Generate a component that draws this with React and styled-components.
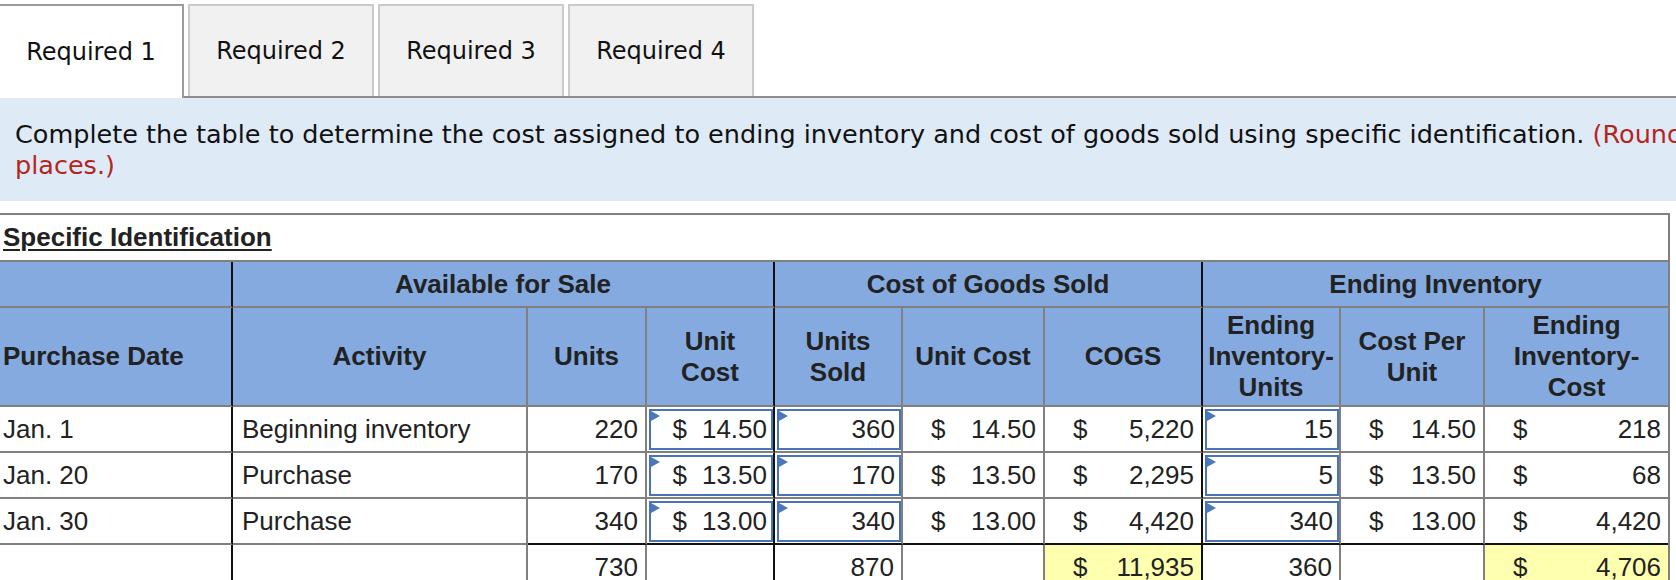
import React from 'react';
import styled, { createGlobalStyle, css } from 'styled-components';

const GlobalStyle = createGlobalStyle`
  html, body {
    margin: 0;
    padding: 0;
    background: #fff;
    overflow: hidden;
  }
`;

const GRID = '#808080';
const SEP = '#111';

const Page = styled.div`
  width: 1680px;
  margin-left: -2px;
  padding-top: 4px;
`;

const TabBar = styled.div`
  display: flex;
  align-items: flex-end;
  gap: 4px;
  height: 92px;
  border-bottom: 2px solid #8c8c8c;
`;

const Tab = styled.div`
  width: 186px;
  height: 92px;
  box-sizing: border-box;
  display: flex;
  align-items: center;
  justify-content: center;
  font-family: 'DejaVu Sans', Verdana, sans-serif;
  font-size: 24px;
  color: #111;
  background: #f1f1f1;
  border: 2px solid #cacaca;
  border-bottom: none;

  ${(p) =>
    p.$active &&
    css`
      height: 94px;
      margin-bottom: -2px;
      background: #fff;
      border-color: #9b9b9b;
    `}
`;

const Instructions = styled.div`
  height: 103px;
  box-sizing: border-box;
  padding: 21px 0 0 17px;
  background: #dfeaf7;
  font-family: 'DejaVu Sans', Verdana, sans-serif;
  font-size: 25.5px;
  line-height: 31px;
  color: #111;
  white-space: nowrap;
  overflow: hidden;
`;

const Note = styled.span`
  color: #b3261e;
`;

const Box = styled.div`
  margin-top: 12px;
  width: 1672px;
  box-sizing: border-box;
  border: 2px solid ${GRID};
  border-bottom: none;
`;

const Title = styled.div`
  height: 45px;
  padding-left: 3px;
  display: flex;
  align-items: center;
  font-family: 'Liberation Sans', Arial, sans-serif;
  font-weight: bold;
  font-size: 26px;
  color: #222;
  text-decoration: underline;
  text-decoration-thickness: 2px;
  text-underline-offset: 3px;
`;

const Table = styled.table`
  width: 1668px;
  table-layout: fixed;
  border-collapse: separate;
  border-spacing: 0;
  border-top: 2px solid ${GRID};
  font-family: 'Liberation Sans', Arial, sans-serif;
  color: #222;
`;

const cellBorders = css`
  border-right: 2px solid ${(p) => (p.$sep ? SEP : GRID)};
  border-bottom: 2px solid ${(p) => (p.$under ? SEP : GRID)};
  &:last-child {
    border-right: none;
  }
`;

const Th = styled.th`
  ${cellBorders}
  background: #84aadf;
  font-weight: bold;
  font-size: 26px;
  line-height: 31px;
  height: ${(p) => p.$h}px;
  padding: 0 4px;
  text-align: ${(p) => (p.$left ? 'left' : 'center')};
  ${(p) => p.$left && 'padding-left: 3px;'}
  vertical-align: middle;
`;

const Td = styled.td`
  ${cellBorders}
  height: 44px;
  padding: 0 7px 0 9px;
  font-size: 26px;
  text-align: ${(p) => (p.$left ? 'left' : 'right')};
  vertical-align: middle;
  white-space: nowrap;
  background: ${(p) => (p.$hl ? '#ffffb0' : '#fff')};
  ${(p) => p.$first && 'padding-left: 3px;'}
`;

const InputTd = styled.td`
  ${cellBorders}
  height: 41px;
  padding: 2px 0 1px 2px;
  vertical-align: top;
`;

const InputBox = styled.div`
  position: relative;
  height: 41px;
  box-sizing: border-box;
  border: 2px solid #4a74b9;
  display: flex;
  align-items: center;
  justify-content: flex-end;
  padding-right: 4px;
  font-size: 26px;
  background: #fff;

  &::before {
    content: '';
    position: absolute;
    top: 0;
    left: 0;
    border-left: 9px solid #4a78be;
    border-top: 5px solid transparent;
    border-bottom: 5px solid transparent;
  }
`;

const Dollar = styled.span`
  margin-right: 15px;
`;

const Acct = styled.div`
  display: flex;
  justify-content: space-between;
  padding-left: 19px;
`;

const rows = [
  { date: 'Jan. 1', act: 'Beginning inventory', units: '220', uc: '14.50', sold: '360', suc: '14.50', cogs: '5,220', eiu: '15', cpu: '14.50', eic: '218' },
  { date: 'Jan. 20', act: 'Purchase', units: '170', uc: '13.50', sold: '170', suc: '13.50', cogs: '2,295', eiu: '5', cpu: '13.50', eic: '68' },
  { date: 'Jan. 30', act: 'Purchase', units: '340', uc: '13.00', sold: '340', suc: '13.00', cogs: '4,420', eiu: '340', cpu: '13.00', eic: '4,420' },
];

const widths = [233, 295, 119, 128, 128, 142, 158, 138, 144, 183];

function Money({ value }) {
  return (
    <Acct>
      <span>$</span>
      <span>{value}</span>
    </Acct>
  );
}

function Input({ children }) {
  return <InputBox>{children}</InputBox>;
}

export default function App() {
  return (
    <Page>
      <GlobalStyle />
      <TabBar>
        <Tab $active>Required 1</Tab>
        <Tab>Required 2</Tab>
        <Tab>Required 3</Tab>
        <Tab>Required 4</Tab>
      </TabBar>

      <Instructions>
        Complete the table to determine the cost assigned to ending inventory and cost of goods sold using specific
        identification. <Note>(Round your answers to 2 decimal</Note>
        <br />
        <Note>places.)</Note>
      </Instructions>

      <Box>
        <Title>Specific Identification</Title>
        <Table>
          <colgroup>
            {widths.map((w, i) => (
              <col key={i} style={{ width: w }} />
            ))}
          </colgroup>
          <thead>
            <tr>
              <Th $h={44} $sep />
              <Th $h={44} colSpan={3} $sep>Available for Sale</Th>
              <Th $h={44} colSpan={3} $sep>Cost of Goods Sold</Th>
              <Th $h={44} colSpan={3}>Ending Inventory</Th>
            </tr>
            <tr>
              <Th $h={97} $left $sep>Purchase Date</Th>
              <Th $h={97}>Activity</Th>
              <Th $h={97}>Units</Th>
              <Th $h={97} $sep>Unit<br />Cost</Th>
              <Th $h={97}>Units<br />Sold</Th>
              <Th $h={97}>Unit Cost</Th>
              <Th $h={97} $sep>COGS</Th>
              <Th $h={97}>Ending<br />Inventory-<br />Units</Th>
              <Th $h={97}>Cost Per<br />Unit</Th>
              <Th $h={97}>Ending<br />Inventory-<br />Cost</Th>
            </tr>
          </thead>
          <tbody>
            {rows.map((r, i) => {
              const last = i === rows.length - 1;
              return (
                <tr key={r.date}>
                  <Td $left $first $sep>{r.date}</Td>
                  <Td $left>{r.act}</Td>
                  <Td $under={last}>{r.units}</Td>
                  <InputTd $sep $under={last}>
                    <Input><Dollar>$</Dollar>{r.uc}</Input>
                  </InputTd>
                  <InputTd $under={last}>
                    <Input>{r.sold}</Input>
                  </InputTd>
                  <Td $under={last}><Money value={r.suc} /></Td>
                  <Td $sep $under={last}><Money value={r.cogs} /></Td>
                  <InputTd $under={last}>
                    <Input>{r.eiu}</Input>
                  </InputTd>
                  <Td $under={last}><Money value={r.cpu} /></Td>
                  <Td $under={last}><Money value={r.eic} /></Td>
                </tr>
              );
            })}
            <tr>
              <Td $sep />
              <Td />
              <Td>730</Td>
              <Td $sep />
              <Td>870</Td>
              <Td />
              <Td $sep $hl><Money value="11,935" /></Td>
              <Td>360</Td>
              <Td />
              <Td $hl><Money value="4,706" /></Td>
            </tr>
          </tbody>
        </Table>
      </Box>
    </Page>
  );
}
